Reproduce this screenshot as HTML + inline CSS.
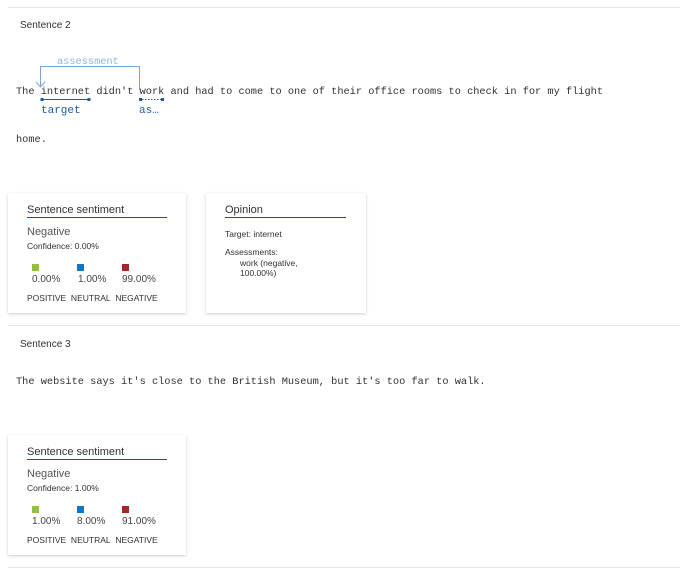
<!DOCTYPE html><html><head><style>
body{margin:0;width:680px;height:573px;background:#fff;position:relative;overflow:hidden;font-family:"Liberation Sans",sans-serif;color:#323130}
.a{position:absolute;white-space:nowrap}
.hr{position:absolute;left:8px;right:0;height:1px;background:#e5e5e5}
.mono{font-family:"Liberation Mono",monospace;font-size:10.3px;color:#323130}
.card{position:absolute;background:#fff;box-shadow:0 1px 3px rgba(0,0,0,.2)}
.t{font-size:11px;color:#323130}
.ul{position:absolute;height:1px;background:#005a9e}
.sq{position:absolute;width:7px;height:7px}
.s{font-size:8.5px}
.p{font-size:10px;color:#444}
</style></head><body>
<div class="hr" style="top:7px"></div>
<div class="a" style="left:20px;top:20px;font-size:10px">Sentence 2</div>
<div class="a mono" style="left:57px;top:56px;color:#8fb5d9">assessment</div>
<svg class="a" style="left:0;top:0" width="680" height="130">
<path d="M139.5 90 V66.5 H40.5 V86" fill="none" stroke="#7aa7d4" stroke-width="1"/>
<path d="M36 82 L40.5 87 L45 82" fill="none" stroke="#7aa7d4" stroke-width="1"/>
<line x1="42" y1="99.5" x2="89" y2="99.5" stroke="#1f5c99" stroke-width="1"/>
<rect x="40.5" y="98" width="3" height="3" fill="#1f5c99"/><rect x="87.5" y="98" width="3" height="3" fill="#1f5c99"/>
<line x1="142" y1="99.5" x2="161" y2="99.5" stroke="#1f5c99" stroke-width="1" stroke-dasharray="1.5,1.5"/>
<rect x="139" y="98" width="3" height="3" fill="#1f5c99"/><rect x="161" y="98" width="3" height="3" fill="#1f5c99"/>
</svg>
<div class="a mono" style="left:16px;top:86px">The internet didn't work and had to come to one of their office rooms to check in for my flight</div>
<div class="a mono" style="left:41px;top:105px;font-size:11px;color:#1f5c99">target</div>
<div class="a mono" style="left:139px;top:105px;font-size:11px;color:#1f5c99">as…</div>
<div class="a mono" style="left:16px;top:134px">home.</div>

<div class="card" style="left:8px;top:193px;width:178px;height:120px"></div>
<div class="a t" style="left:27px;top:204px">Sentence sentiment</div>
<div class="ul" style="left:27px;top:217px;width:140px"></div>
<div class="a t" style="left:27px;top:226px;color:#555">Negative</div>
<div class="a s" style="left:27px;top:241px">Confidence: 0.00%</div>
<div class="sq" style="left:32px;top:264px;background:#92c13f"></div>
<div class="sq" style="left:77px;top:264px;background:#0078d4"></div>
<div class="sq" style="left:122px;top:264px;background:#a4262c"></div>
<div class="a p" style="left:32px;top:274px">0.00%</div>
<div class="a p" style="left:78px;top:274px">1.00%</div>
<div class="a p" style="left:122px;top:274px">99.00%</div>
<div class="a s" style="left:27px;top:293px">POSITIVE&nbsp; NEUTRAL&nbsp; NEGATIVE</div>

<div class="card" style="left:206px;top:193px;width:160px;height:120px"></div>
<div class="a t" style="left:225px;top:204px">Opinion</div>
<div class="ul" style="left:225px;top:217px;width:121px"></div>
<div class="a s" style="left:225px;top:229px">Target: internet</div>
<div class="a s" style="left:225px;top:247px">Assessments:</div>
<div class="a s" style="left:240px;top:258px;line-height:10px;white-space:normal;width:80px">work (negative, 100.00%)</div>

<div class="hr" style="top:325px"></div>
<div class="a" style="left:20px;top:339px;font-size:10px">Sentence 3</div>
<div class="a mono" style="left:16px;top:376px">The website says it's close to the British Museum, but it's too far to walk.</div>

<div class="card" style="left:8px;top:435px;width:178px;height:120px"></div>
<div class="a t" style="left:27px;top:446px">Sentence sentiment</div>
<div class="ul" style="left:27px;top:459px;width:140px"></div>
<div class="a t" style="left:27px;top:468px;color:#555">Negative</div>
<div class="a s" style="left:27px;top:483px">Confidence: 1.00%</div>
<div class="sq" style="left:32px;top:506px;background:#92c13f"></div>
<div class="sq" style="left:77px;top:506px;background:#0078d4"></div>
<div class="sq" style="left:122px;top:506px;background:#a4262c"></div>
<div class="a p" style="left:32px;top:516px">1.00%</div>
<div class="a p" style="left:77px;top:516px">8.00%</div>
<div class="a p" style="left:122px;top:516px">91.00%</div>
<div class="a s" style="left:27px;top:535px">POSITIVE&nbsp; NEUTRAL&nbsp; NEGATIVE</div>
<div class="hr" style="top:567px"></div>
</body></html>
